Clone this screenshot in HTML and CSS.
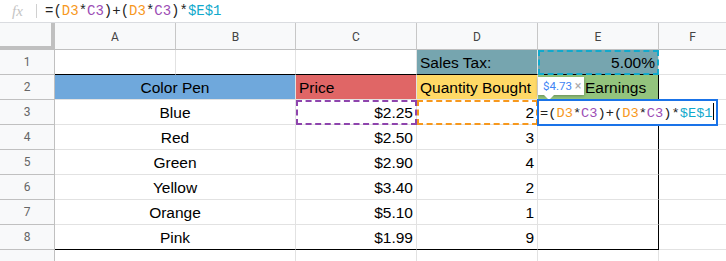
FILE: index.html
```html
<!DOCTYPE html>
<html lang="en">
<head>
    <meta charset="UTF-8">
    <title>Sheet</title>
    <link rel="stylesheet" href="styles.css">
</head>
<body>
<div class="formula-bar">
    <span class="fx">fx</span>
    <span class="sep"></span>
    <span class="formula">=(<b class="c-or">D3</b>*<b class="c-pu">C3</b>)+(<b class="c-or">D3</b>*<b class="c-pu">C3</b>)*<b class="c-cy">$E$1</b></span>
</div>
<div class="sheet">
    <!-- header row -->
    <div class="corner"></div>
    <div class="col-h">A</div>
    <div class="col-h">B</div>
    <div class="col-h">C</div>
    <div class="col-h">D</div>
    <div class="col-h">E</div>
    <div class="col-h last">F</div>

    <!-- row 1 -->
    <div class="row-h">1</div>
    <div class="cell top-edge"></div>
    <div class="cell top-edge"></div>
    <div class="cell top-edge"></div>
    <div class="cell top-edge left tax">Sales Tax:</div>
    <div class="cell top-edge right tax ref-cyan">5.00%</div>
    <div class="cell last"></div>

    <!-- row 2 -->
    <div class="row-h">2</div>
    <div class="cell span2 center blue">Color Pen</div>
    <div class="cell left red">Price</div>
    <div class="cell left yellow">Quantity Bought</div>
    <div class="cell green edge-r earn">Earnings</div>
    <div class="cell last"></div>

    <!-- row 3 -->
    <div class="row-h">3</div>
    <div class="cell span2 center">Blue</div>
    <div class="cell right ref-purple">$2.25</div>
    <div class="cell right ref-orange">2</div>
    <div class="cell edge-r active">
        <div class="tip">$4.73 <span>×</span></div>
        <div class="editor">=(<b class="c-or">D3</b>*<b class="c-pu">C3</b>)+(<b class="c-or">D3</b>*<b class="c-pu">C3</b>)*<b class="c-cy">$E$1</b><i class="caret"></i></div>
    </div>
    <div class="cell last"></div>

    <div class="row-h">4</div>
    <div class="cell span2 center">Red</div>
    <div class="cell right">$2.50</div>
    <div class="cell right">3</div>
    <div class="cell edge-r"></div>
    <div class="cell last"></div>

    <div class="row-h">5</div>
    <div class="cell span2 center">Green</div>
    <div class="cell right">$2.90</div>
    <div class="cell right">4</div>
    <div class="cell edge-r"></div>
    <div class="cell last"></div>

    <div class="row-h">6</div>
    <div class="cell span2 center">Yellow</div>
    <div class="cell right">$3.40</div>
    <div class="cell right">2</div>
    <div class="cell edge-r"></div>
    <div class="cell last"></div>

    <div class="row-h">7</div>
    <div class="cell span2 center">Orange</div>
    <div class="cell right">$5.10</div>
    <div class="cell right">1</div>
    <div class="cell edge-r"></div>
    <div class="cell last"></div>

    <div class="row-h">8</div>
    <div class="cell span2 center edge-b">Pink</div>
    <div class="cell right edge-b">$1.99</div>
    <div class="cell right edge-b">9</div>
    <div class="cell edge-r edge-b"></div>
    <div class="cell last"></div>

    <div class="row-h"></div>
    <div class="cell span2"></div>
    <div class="cell"></div>
    <div class="cell"></div>
    <div class="cell"></div>
    <div class="cell last"></div>
</div>
</body>
</html>
```
FILE: styles.css
```css
*{
    margin:0;
    padding:0;
    box-sizing:border-box;
}
html,body{
    width:726px;
    height:261px;
    overflow:hidden;
    background:#fff;
}
body{
    font-family:"Liberation Sans",Arial,sans-serif;
}
b{
    font-weight:normal;
}

/* formula bar */
.formula-bar{
    height:23px;
    display:flex;
    align-items:center;
    border-bottom:1px solid #dadce0;
}
.fx{
    width:36px;
    padding-left:12px;
    font-family:"Liberation Serif",serif;
    font-style:italic;
    font-size:15px;
    color:#c4c4c4;
}
.sep{
    width:1px;
    height:14px;
    background:#d0d0d0;
    margin-right:8px;
}
.formula,
.editor{
    font-family:"Liberation Mono","DejaVu Sans Mono",monospace;
    font-size:14px;
    color:#222;
    white-space:nowrap;
}
.c-or{ color:#f7981d; }
.c-pu{ color:#9c4db5; }
.c-cy{ color:#11a9cc; }

/* grid */
.sheet{
    display:grid;
    grid-template-columns:55px 121px 120px 121px 121px 121px 1fr;
    grid-template-rows:27px repeat(9,25px);
}
.corner{
    background:#f8f9fa;
    border-right:4px solid #c0c0c0;
    border-bottom:4px solid #c0c0c0;
}
.col-h{
    background:#f8f9fa;
    border-right:1px solid #c7c7c7;
    border-bottom:1px solid #c0c0c0;
    display:flex;
    align-items:center;
    justify-content:center;
    font-family:Roboto,"Liberation Sans",sans-serif;
    font-size:12px;
    color:#444;
    padding-top:1px;
}
.col-h.last{
    border-right:none;
}
.row-h{
    background:#f8f9fa;
    border-right:1px solid #c0c0c0;
    border-bottom:1px solid #c0c0c0;
    display:flex;
    align-items:center;
    justify-content:center;
    font-family:Roboto,"Liberation Sans",sans-serif;
    font-size:12px;
    color:#666;
}
.cell{
    position:relative;
    border-right:1px solid #e2e2e2;
    border-bottom:1px solid #e2e2e2;
    display:flex;
    align-items:center;
    padding:2px 3px 0;
    font-size:15.5px;
    color:#000;
    white-space:nowrap;
}
.cell.last{
    border-right:none;
}
.span2{ grid-column:span 2; }
.center{ justify-content:center; }
.left{ justify-content:flex-start; }
.right{ justify-content:flex-end; }

.blue{ background:#6fa8dc; }
.red{ background:#e06666; }
.yellow{ background:#ffd966; }
.green{ background:#93c47d; }
.tax{ background:#76a5af; }
.top-edge{ border-bottom-color:#000; }
.edge-r{ border-right-color:#000; }
.edge-b{ border-bottom-color:#000; }
.earn{ padding-left:47px; }

/* referenced ranges */
.ref-purple{ outline:2px dashed #8e44ad; outline-offset:-2px; }
.ref-orange{ outline:2px dashed #f7981d; outline-offset:-2px; }
.ref-cyan{ outline:2px dashed #11a9cc; outline-offset:-2px; }

/* in-cell editor */
.active{ z-index:2; }
.editor{
    position:absolute;
    left:-1px;
    top:-1px;
    width:181px;
    height:27px;
    border:2px solid #1a73e8;
    background:#fff;
    padding:2px 0 0 1px;
    line-height:20px;
    font-size:13.7px;
}
.caret{
    display:inline-block;
    width:1px;
    height:17px;
    background:#000;
    vertical-align:-3px;
}
.tip{
    position:absolute;
    left:0;
    top:-23px;
    height:18px;
    padding:0 3px 0 5px;
    background:#fff;
    box-shadow:0 1px 3px rgba(0,0,0,.3);
    font-family:Roboto,"Liberation Sans",sans-serif;
    font-size:11.5px;
    line-height:18px;
    color:#4285f4;
}
.tip span{
    color:#aaa;
    font-size:12.5px;
}
.tip::after{
    content:"";
    position:absolute;
    left:6px;
    bottom:-5px;
    border-left:5px solid transparent;
    border-right:5px solid transparent;
    border-top:5px solid #fff;
}
```
